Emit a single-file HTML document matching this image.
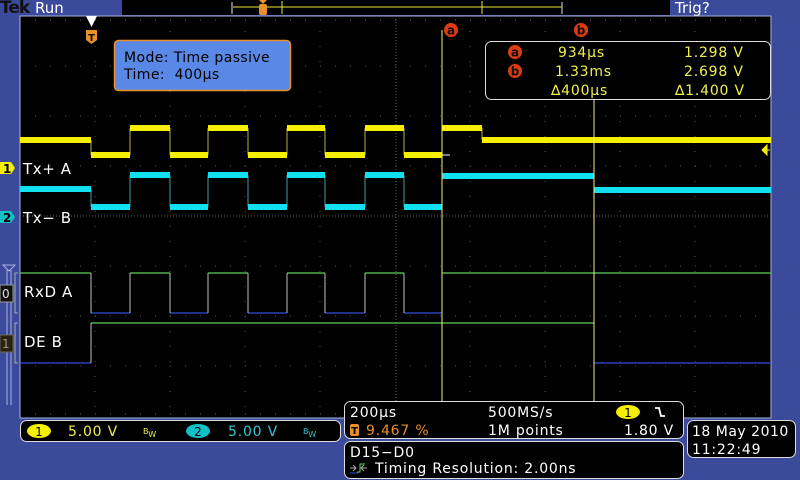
<!DOCTYPE html>
<html><head><meta charset="utf-8"><style>
html,body{margin:0;padding:0;background:#3c4a9c;width:800px;height:480px;overflow:hidden}
svg{display:block}
text{font-family:"DejaVu Sans","Liberation Sans",sans-serif}
</style></head><body>
<svg width="800" height="480" viewBox="0 0 800 480" xmlns="http://www.w3.org/2000/svg">
<rect width="800" height="480" fill="#3c4a9c"/>
<!-- top bar -->
<text x="0" y="13" font-family="Liberation Serif" font-size="17" font-weight="bold" fill="#111" letter-spacing="-1">Tek</text>
<text x="35" y="13" font-size="15" fill="#fff">Run</text>
<rect x="122" y="0" width="548" height="15" fill="#000"/>
<line x1="233" y1="7" x2="562" y2="7" stroke="#e8e840" stroke-width="1"/>
<path d="M232 2V14M562 2V14" stroke="#999" stroke-width="1.5" fill="none"/>
<line x1="282" y1="1" x2="282" y2="14" stroke="#e8e840"/>
<line x1="482" y1="1" x2="482" y2="14" stroke="#e8e840"/>
<rect x="259" y="4" width="8" height="11" rx="2" fill="#e8902a"/>
<path d="M259 0h8l-4 4z" fill="#e8902a"/>
<text x="675" y="13" font-size="15" fill="#fff">Trig?</text>
<!-- graticule -->
<rect x="20" y="16" width="751" height="402" fill="#000" stroke="#a8b0e0" stroke-width="1"/>
<g stroke="#555" stroke-width="1" stroke-dasharray="1 14">
<line x1="20" y1="66" x2="771" y2="66"/><line x1="20" y1="116" x2="771" y2="116"/><line x1="20" y1="166" x2="771" y2="166"/>
<line x1="20" y1="266" x2="771" y2="266"/><line x1="20" y1="316" x2="771" y2="316"/><line x1="20" y1="366" x2="771" y2="366"/>
<line x1="95" y1="16" x2="95" y2="418"/><line x1="170" y1="16" x2="170" y2="418"/><line x1="245" y1="16" x2="245" y2="418"/><line x1="320" y1="16" x2="320" y2="418"/>
<line x1="470" y1="16" x2="470" y2="418"/><line x1="545" y1="16" x2="545" y2="418"/><line x1="620" y1="16" x2="620" y2="418"/><line x1="695" y1="16" x2="695" y2="418"/>
</g>
<g stroke="#666" stroke-width="1" stroke-dasharray="1 2">
<line x1="20" y1="216" x2="771" y2="216"/><line x1="396" y1="16" x2="396" y2="418"/>
</g>
<g stroke="#666" stroke-dasharray="1 14"><line x1="20" y1="20" x2="771" y2="20"/><line x1="20" y1="414" x2="771" y2="414"/></g>
<!-- yellow -->
<path d="M91 140V155M130 128V155M170 128V155M208 128V155M248 128V155M287 128V155M325 128V155M365 128V155M404 128V155M442 128V155M482 128V140" stroke="#b0b040" stroke-width="1"/>
<path d="M20 140H91M91 155H130M130 128H170M170 155H208M208 128H248M248 155H287M287 128H325M325 155H365M365 128H404M404 155H442M442 128H482M482 140H771" stroke="#f5f000" stroke-width="6" fill="none"/>
<line x1="442" y1="155" x2="450" y2="155" stroke="#fff"/>
<!-- cyan -->
<path d="M91 189V207M130 175V207M170 175V207M208 175V207M248 175V207M287 175V207M325 175V207M365 175V207M404 175V207M442 176V207M594 176V190" stroke="#40a0a8" stroke-width="1"/>
<path d="M20 189H91M91 207H130M130 175H170M170 207H208M208 175H248M248 207H287M287 175H325M325 207H365M365 175H404M404 207H442M442 176H594M594 190H771" stroke="#10e0f0" stroke-width="6" fill="none"/>
<!-- digital -->
<path d="M20 273H91M130 273H170M208 273H248M287 273H325M365 273H404M442 273H771" stroke="#5cd05c" stroke-width="1.3" fill="none"/>
<path d="M91 313H130M170 313H208M248 313H287M325 313H365M404 313H442" stroke="#3050e0" stroke-width="1.3" fill="none"/>
<path d="M91 273V313M130 273V313M170 273V313M208 273V313M248 273V313M287 273V313M325 273V313M365 273V313M404 273V313M442 273V313" stroke="#c0c0c0" stroke-width="1"/>
<path d="M20 363H91M594 363H771" stroke="#3050e0" stroke-width="1.3"/>
<path d="M91 323H594" stroke="#5cd05c" stroke-width="1.3"/>
<path d="M91 323V363M594 323V363" stroke="#c0c0c0"/>
<!-- cursors -->
<line x1="442" y1="30" x2="442" y2="418" stroke="#f0f080" stroke-width="1"/>
<line x1="594" y1="100" x2="594" y2="418" stroke="#f0f080" stroke-width="1"/>
<circle cx="451" cy="30" r="7" fill="#e03a10"/><text x="451" y="34.5" font-size="12" font-weight="bold" fill="#111" text-anchor="middle">a</text>
<circle cx="581" cy="30" r="7" fill="#e03a10"/><text x="581" y="34.5" font-size="12" font-weight="bold" fill="#111" text-anchor="middle">b</text>
<!-- trigger marker -->
<path d="M86 16h11l-5.5 11z" fill="#fff"/>
<path d="M86 30h11v10l-5.5 4l-5.5-4z" fill="#e8902a"/><text x="91.5" y="41" font-size="10" font-weight="bold" fill="#111" text-anchor="middle">T</text>
<path d="M770 150h-8M762 150l5-5v10z" stroke="#f5f000" fill="#f5f000"/>
<!-- mode box -->
<rect x="114.5" y="40.5" width="176" height="50" rx="4" fill="#5a88e6" stroke="#e8902a" stroke-width="1.5"/>
<text x="124" y="62" font-size="14" fill="#000" letter-spacing="0.4">Mode: Time passive</text>
<text x="124" y="79" font-size="14" fill="#000" letter-spacing="0.4">Time:&#160; 400µs</text>
<!-- cursor readout -->
<rect x="485.5" y="41.5" width="285" height="58" rx="6" fill="#000" stroke="#ddd" stroke-width="1"/>
<circle cx="515" cy="52" r="7" fill="#e03a10"/><text x="515" y="56.5" font-size="12" font-weight="bold" fill="#111" text-anchor="middle">a</text>
<circle cx="515" cy="71" r="7" fill="#e03a10"/><text x="515" y="75.5" font-size="12" font-weight="bold" fill="#111" text-anchor="middle">b</text>
<g font-size="14" fill="#f0f050" letter-spacing="0.8">
<text x="558" y="57">934µs</text><text x="555" y="76">1.33ms</text><text x="551" y="95">∆400µs</text>
<text x="684" y="57">1.298 V</text><text x="684" y="76">2.698 V</text><text x="675" y="95">∆1.400 V</text>
</g>
<!-- left labels -->
<path d="M0 162h11l4 6l-4 6h-11z" fill="#f5f000"/><text x="3" y="173" font-size="12" font-weight="bold" fill="#000">1</text>
<text x="23" y="174" font-size="15" fill="#fff" letter-spacing="0.6">Tx+ A</text>
<path d="M0 211h11l4 6l-4 6h-11z" fill="#10c0c8"/><text x="3" y="222" font-size="12" font-weight="bold" fill="#000">2</text>
<text x="23" y="223" font-size="15" fill="#fff" letter-spacing="0.6">Tx− B</text>
<path d="M3 265h12l-6 6z" fill="none" stroke="#a8b0e0"/>
<path d="M7 270V405M11 270V405" stroke="#a8b0e0"/>
<rect x="0" y="285" width="13" height="17" fill="#111" stroke="#999"/><text x="2" y="298" font-size="12" fill="#ddd">0</text>
<rect x="0" y="335" width="13" height="17" fill="#2a2210" stroke="#665"/><text x="2" y="348" font-size="12" fill="#998">1</text>
<path d="M18 273h-3v40h3M18 323h-3v40h3" stroke="#aaa" fill="none"/>
<text x="24" y="297" font-size="15" fill="#fff" letter-spacing="0.6">RxD A</text>
<text x="24" y="347" font-size="15" fill="#fff" letter-spacing="0.6">DE B</text>
<!-- bottom channel bar -->
<rect x="20.5" y="420.5" width="320" height="21" rx="6" fill="#000" stroke="#ddd"/>
<ellipse cx="39" cy="431" rx="12" ry="7" fill="#f5f000"/><text x="39" y="436" font-size="12" fill="#000" text-anchor="middle">1</text>
<text x="68" y="436" font-size="14" fill="#f0f050" letter-spacing="0.8">5.00 V</text>
<text x="143" y="434" font-size="8" fill="#f0f050">B<tspan dy="3">W</tspan></text>
<ellipse cx="198" cy="431" rx="12" ry="7" fill="#10c0c8"/><text x="198" y="436" font-size="12" fill="#000" text-anchor="middle">2</text>
<text x="228" y="436" font-size="14" fill="#30c8d0" letter-spacing="0.8">5.00 V</text>
<text x="303" y="434" font-size="8" fill="#30c8d0">B<tspan dy="3">W</tspan></text>
<!-- timebase box -->
<rect x="344.5" y="401.5" width="339" height="37" rx="6" fill="#000" stroke="#ddd"/>
<text x="350" y="417" font-size="14" fill="#fff" letter-spacing="0.8">200µs</text>
<text x="488" y="417" font-size="14" fill="#fff" letter-spacing="0.8">500MS/s</text>
<ellipse cx="628" cy="412" rx="12" ry="7" fill="#f5f000"/><text x="628" y="417" font-size="12" fill="#000" text-anchor="middle">1</text>
<path d="M655 408h4l2 8h4" stroke="#fff" stroke-width="1.8" fill="none"/>
<rect x="350" y="424" width="9" height="12" rx="2" fill="#e8902a"/><text x="354.5" y="434" font-size="10" font-weight="bold" fill="#000" text-anchor="middle">T</text>
<text x="366" y="435" font-size="14" fill="#e8902a" letter-spacing="0.8">9.467 %</text>
<text x="488" y="435" font-size="14" fill="#fff" letter-spacing="0.8">1M points</text>
<text x="624" y="435" font-size="14" fill="#fff" letter-spacing="0.8">1.80 V</text>
<!-- D15 box -->
<rect x="344.5" y="441.5" width="339" height="37" rx="6" fill="#000" stroke="#ddd"/>
<text x="350" y="457" font-size="14" fill="#fff" letter-spacing="0.8">D15−D0</text>
<path d="M350 468h6M353 465l3 3-3 3M367 468h-6M364 465l-3 3 3 3" stroke="#aaa" fill="none"/>
<path d="M357 472h3v-8h5" stroke="#5cd05c" fill="none"/><path d="M350 473h8" stroke="#3050e0"/>
<text x="375" y="473" font-size="14" fill="#fff" letter-spacing="0.8">Timing Resolution: 2.00ns</text>
<!-- date box -->
<rect x="687.5" y="420.5" width="108" height="37" rx="6" fill="#000" stroke="#ddd"/>
<text x="692" y="436" font-size="14" fill="#fff" letter-spacing="0.5">18 May 2010</text>
<text x="692" y="454" font-size="14" fill="#fff" letter-spacing="0.8">11:22:49</text>
</svg>
</body></html>
